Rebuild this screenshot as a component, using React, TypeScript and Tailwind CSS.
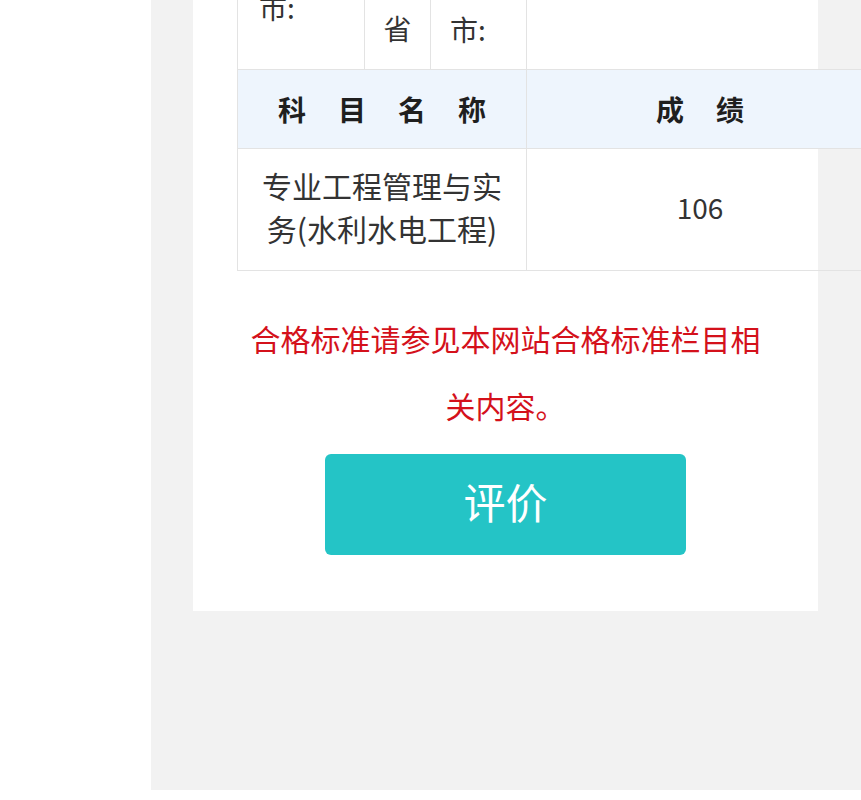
export default function App() {
  const font = { fontFamily: '"Noto Sans CJK SC", "Noto Sans", sans-serif' }
  return (
    <div className="min-h-[800px] w-[861px] overflow-hidden bg-white" style={font}>
      <div className="ml-[151px] h-[790px] w-[760px] bg-[#f2f2f2]">
        <div className="ml-[42px] h-[611px] w-[625px] bg-white pl-[44px]">
          {/* Score table */}
          <table className="w-[636px] table-fixed border-collapse text-[#333]">
            <colgroup>
              <col className="w-[127px]" />
              <col className="w-[66px]" />
              <col className="w-[96px]" />
              <col className="w-[347px]" />
            </colgroup>
            <tbody>
              <tr className="h-[69px]">
                <td className="border-x border-[#e3e3e3] px-[21px] align-top">
                  <div className="-mt-[8px] text-[28px] leading-[30px]">市:</div>
                </td>
                <td className="border-x border-[#e3e3e3] text-center align-top">
                  <div className="pt-[9px] text-[28px] leading-[38px]">省</div>
                </td>
                <td className="border-x border-[#e3e3e3] px-[19px] align-top">
                  <div className="pt-[10px] text-[28px] leading-[38px]">市:</div>
                </td>
                <td className="border-x border-[#e3e3e3]"></td>
              </tr>
              <tr className="h-[79px] bg-[#eef5fd]">
                <td colSpan={3} className="border border-[#e3e3e3] text-center">
                  <div className="flex justify-center gap-[32px] text-[28px] font-bold text-[#1f1f1f]">
                    <span>科</span>
                    <span>目</span>
                    <span>名</span>
                    <span>称</span>
                  </div>
                </td>
                <td className="border border-[#e3e3e3] text-center">
                  <div className="flex justify-center gap-[32px] text-[28px] font-bold text-[#1f1f1f]">
                    <span>成</span>
                    <span>绩</span>
                  </div>
                </td>
              </tr>
              <tr className="h-[122px]">
                <td colSpan={3} className="border border-[#e3e3e3] pb-[4px] text-center text-[30px] leading-[43px]">
                  专业工程管理与实
                  <br />
                  务(水利水电工程)
                </td>
                <td className="border border-[#e3e3e3] pb-[4px] text-center text-[28px]">106</td>
              </tr>
            </tbody>
          </table>

          <div className="-ml-[44px] mt-[34px] flex flex-col items-center">
            <p className="w-[520px] text-center text-[30px] leading-[67px] text-[#d4111b]">
              合格标准请参见本网站合格标准栏目相关内容。
            </p>
            <button className="mt-[15px] flex h-[101px] w-[361px] items-center justify-center rounded-[6px] bg-[#24c4c6] pb-[8px] text-[42px] text-white">
              评价
            </button>
          </div>
        </div>
      </div>
    </div>
  )
}
